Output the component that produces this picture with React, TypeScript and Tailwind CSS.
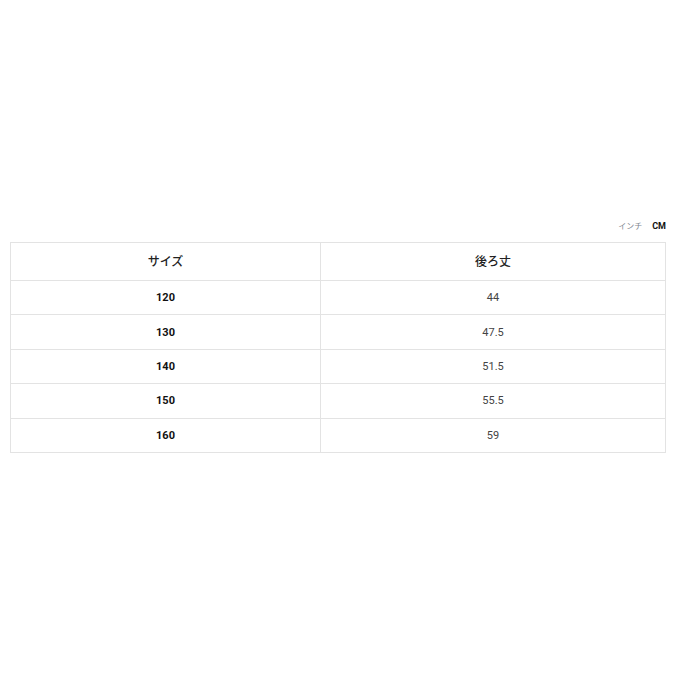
const rows = [
  { size: "120", length: "44" },
  { size: "130", length: "47.5" },
  { size: "140", length: "51.5" },
  { size: "150", length: "55.5" },
  { size: "160", length: "59" },
];

const font = "font-['Roboto','Noto_Sans_CJK_JP',sans-serif]";

export default function App() {
  return (
    <div className={`h-[680px] w-[680px] bg-white pt-[222px] ${font}`}>
      <div className="flex items-center justify-end gap-[10px] pr-[14px] leading-none">
        <span className="text-[8px] text-[#7f8790]">インチ</span>
        <span className="text-[9px] font-bold text-[#111]">CM</span>
      </div>
      <table className="ml-[10px] mt-[11px] w-[656px] border-collapse border border-[#e3e3e3] text-[11px] leading-none">
        <thead>
          <tr className="h-[38px]">
            <th className="w-[310px] border border-[#e3e3e3] text-[12px] font-medium text-[#222]">
              サイズ
            </th>
            <th className="border border-[#e3e3e3] text-[12px] font-medium text-[#222]">
              後ろ丈
            </th>
          </tr>
        </thead>
        <tbody>
          {rows.map((r) => (
            <tr key={r.size} className="h-[34.4px]">
              <td className="border border-[#e3e3e3] text-center font-bold text-[#111]">
                {r.size}
              </td>
              <td className="border border-[#e3e3e3] text-center text-[#444]">
                {r.length}
              </td>
            </tr>
          ))}
        </tbody>
      </table>
    </div>
  );
}
